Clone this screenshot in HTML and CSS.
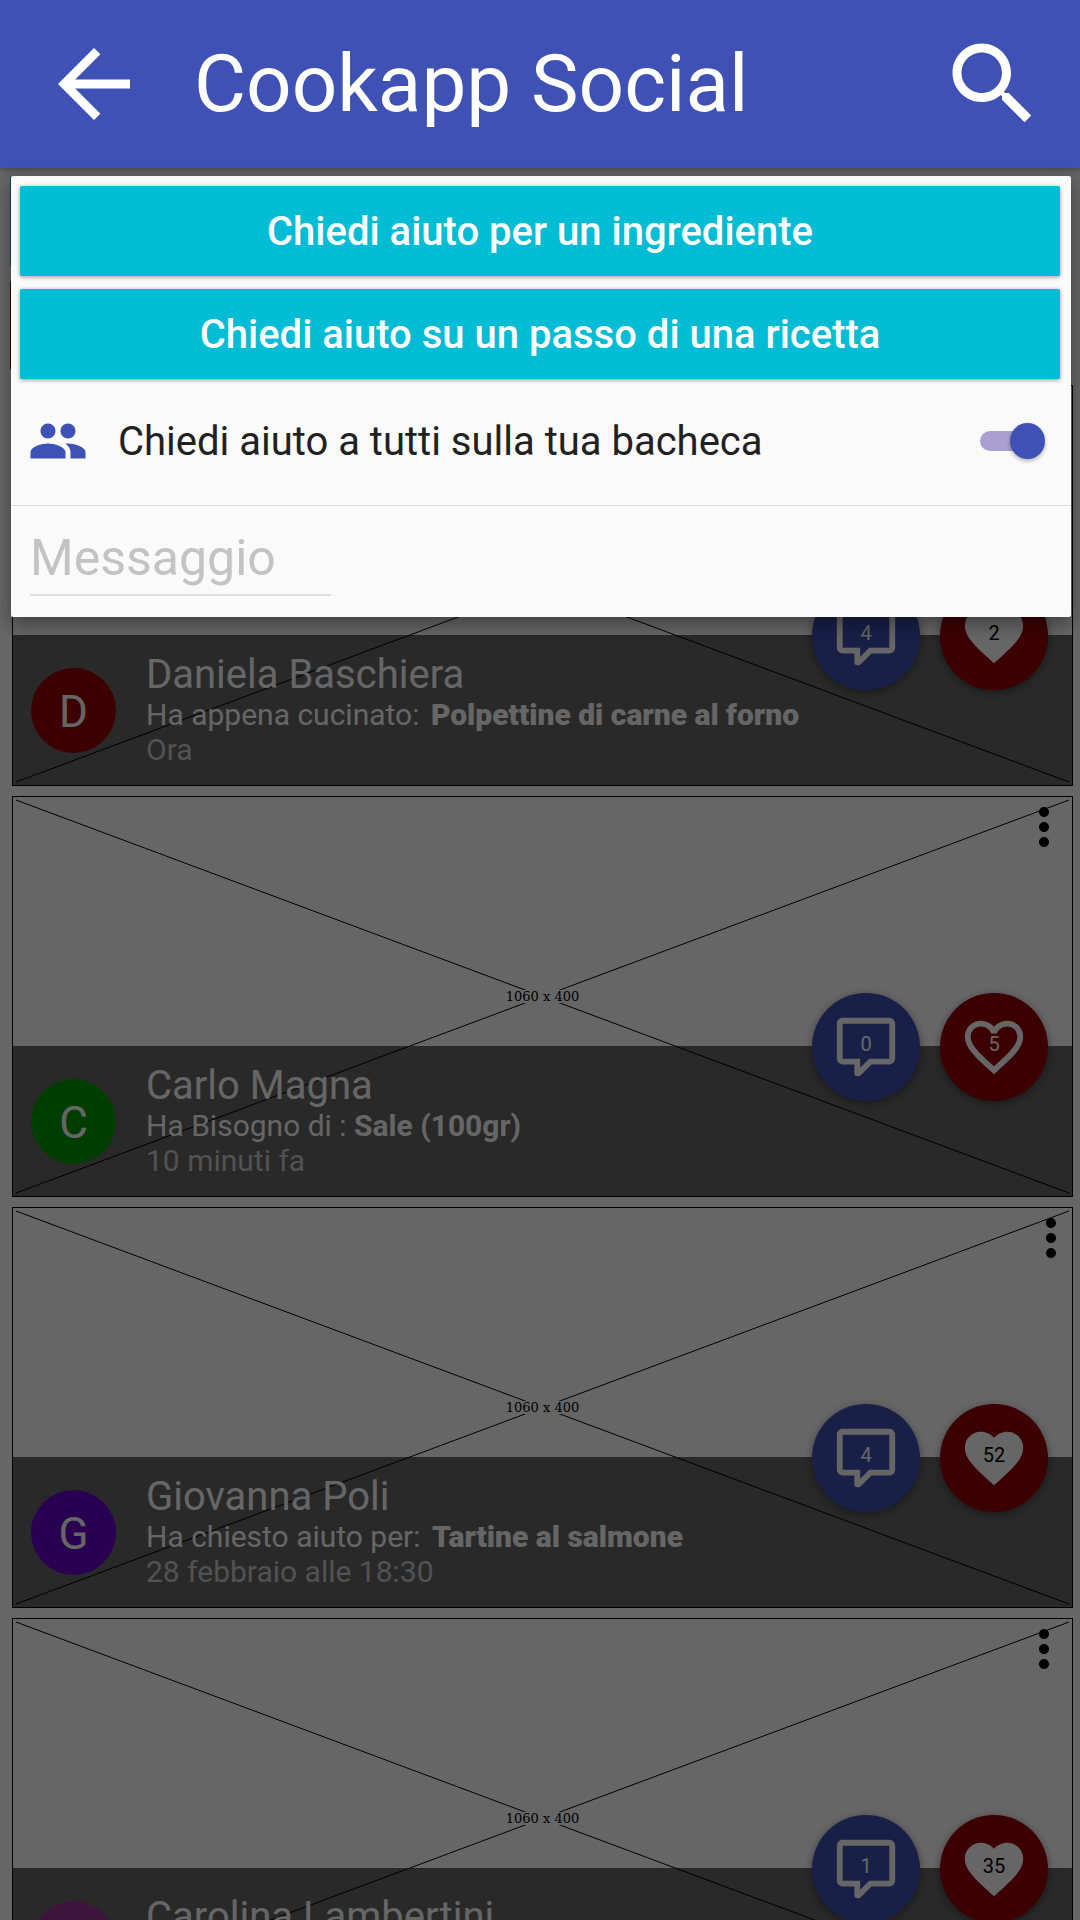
FILE: index.html
```html
<!DOCTYPE html>
<html lang="it">
<head>
<meta charset="utf-8">
<meta name="viewport" content="width=device-width, initial-scale=1">
<title>Cookapp Social</title>
<link rel="stylesheet" href="styles.css">
</head>
<body>
<svg class="sprite" aria-hidden="true">
  <symbol id="i-back" viewBox="0 0 24 24"><path d="M20 11H7.83l5.59-5.59L12 4l-8 8 8 8 1.41-1.41L7.83 13H20v-2z"/></symbol>
  <symbol id="i-search" viewBox="0 0 24 24"><path d="M15.5 14h-.79l-.28-.27C15.41 12.59 16 11.11 16 9.5 16 5.91 13.09 3 9.5 3S3 5.91 3 9.5 5.91 16 9.5 16c1.61 0 3.09-.59 4.23-1.57l.27.28v.79l5 4.99L20.49 19l-4.99-5zm-6 0C7.01 14 5 11.99 5 9.5S7.01 5 9.5 5 14 7.01 14 9.5 11.99 14 9.5 14z"/></symbol>
  <symbol id="i-people" viewBox="0 0 24 24"><path d="M16 11c1.66 0 2.99-1.34 2.99-3S17.66 5 16 5c-1.66 0-3 1.34-3 3s1.34 3 3 3zm-8 0c1.66 0 2.99-1.34 2.99-3S9.66 5 8 5C6.34 5 5 6.34 5 8s1.34 3 3 3zm0 2c-2.33 0-7 1.17-7 3.5V19h14v-2.500c0-2.330-4.670-3.500-7-3.500zm8 0c-.29 0-.62.02-.97.05 1.160.84 1.970 1.970 1.970 3.450V19h6v-2.500c0-2.330-4.670-3.500-7-3.500z"/></symbol>
  <symbol id="i-more" viewBox="0 0 24 24"><path d="M12 8c1.100 0 2-.9 2-2s-.9-2-2-2-2 .9-2 2 .9 2 2 2zm0 2c-1.100 0-2 .9-2 2s.9 2 2 2 2-.9 2-2-.9-2-2-2zm0 6c-1.100 0-2 .9-2 2s.9 2 2 2 2-.9 2-2-.9-2-2-2z"/></symbol>
  <symbol id="i-comment" viewBox="0 0 24 24"><path d="M9,22A1,1 0 0,1 8,21V18H4A2,2 0 0,1 2,16V4C2,2.890 2.900,2 4,2H20A2,2 0 0,1 22,4V16A2,2 0 0,1 20,18H13.900L10.200,21.710C10,21.900 9.750,22 9.500,22H9M10,16V19.080L13.080,16H20V4H4V16H10Z"/></symbol>
  <symbol id="i-heart" viewBox="0 0 24 24"><path d="M12 21.350l-1.450-1.320C5.400 15.360 2 12.280 2 8.500 2 5.420 4.420 3 7.500 3c1.740 0 3.410.81 4.500 2.090C13.090 3.810 14.760 3 16.500 3 19.580 3 22 5.420 22 8.500c0 3.780-3.400 6.860-8.550 11.540L12 21.350z"/></symbol>
  <symbol id="i-heart-line" viewBox="0 0 24 24"><path d="M16.500 3c-1.740 0-3.410.81-4.500 2.090C10.910 3.810 9.240 3 7.500 3 4.420 3 2 5.420 2 8.500c0 3.780 3.400 6.860 8.550 11.540L12 21.350l1.450-1.320C18.600 15.360 22 12.280 22 8.500 22 5.420 19.580 3 16.500 3zm-4.400 15.550l-.1.100-.1-.1C7.140 14.240 4 11.390 4 8.500 4 6.500 5.500 5 7.500 5c1.540 0 3.040.99 3.570 2.360h1.870C13.460 5.990 14.960 5 16.500 5c2 0 3.500 1.500 3.500 3.500 0 2.890-3.140 5.740-7.900 10.050z"/></symbol>
  <symbol id="i-cross" viewBox="0 0 1060 400" preserveAspectRatio="none"><path d="M3 3L1057 397M3 397L1057 3" fill="none" stroke="#000" vector-effect="non-scaling-stroke"/></symbol>
</svg>

<div class="app">
  <header class="bar">
    <button class="icon-btn" type="button" aria-label="Indietro"><svg class="bar-icon"><use href="#i-back"/></svg></button>
    <h1 class="bar-title">Cookapp Social</h1>
    <button class="icon-btn" type="button" aria-label="Cerca"><svg class="bar-icon"><use href="#i-search"/></svg></button>
  </header>

  <div class="stage">
    <main class="feed">
      <div class="shortcuts">
        <button class="shortcut" type="button" aria-label="Chiedi aiuto"></button>
        <button class="shortcut shortcut-red" type="button" aria-label="Condividi"></button>
      </div>

      <article class="post">
        <svg class="cross" aria-hidden="true"><use href="#i-cross"/></svg>
        <div class="photo">
          <span class="size">1060 x 400</span>
          <button class="menu" type="button" aria-label="Altro"><svg class="menu-icon"><use href="#i-more"/></svg></button>
        </div>
        <div class="band">
          <span class="avatar red">D</span>
          <div class="info">
            <h2 class="name">Daniela Baschiera</h2>
            <p class="action">Ha appena cucinato: <b class="item">Polpettine di carne al forno</b></p>
            <p class="time">Ora</p>
          </div>
          <div class="fabs">
            <button class="fab blue" type="button" aria-label="Commenti: 4"><svg class="fab-icon"><use href="#i-comment"/></svg><span class="count">4</span></button>
            <button class="fab red liked" type="button" aria-label="Mi piace: 2"><svg class="fab-icon"><use href="#i-heart"/></svg><span class="count">2</span></button>
          </div>
        </div>
      </article>

      <article class="post">
        <svg class="cross" aria-hidden="true"><use href="#i-cross"/></svg>
        <div class="photo">
          <span class="size">1060 x 400</span>
          <button class="menu" type="button" aria-label="Altro"><svg class="menu-icon"><use href="#i-more"/></svg></button>
        </div>
        <div class="band">
          <span class="avatar green">C</span>
          <div class="info">
            <h2 class="name">Carlo Magna</h2>
            <p class="action">Ha Bisogno di : <b>Sale (100gr)</b></p>
            <p class="time">10 minuti fa</p>
          </div>
          <div class="fabs">
            <button class="fab blue" type="button" aria-label="Commenti: 0"><svg class="fab-icon"><use href="#i-comment"/></svg><span class="count">0</span></button>
            <button class="fab red" type="button" aria-label="Mi piace: 5"><svg class="fab-icon"><use href="#i-heart-line"/></svg><span class="count">5</span></button>
          </div>
        </div>
      </article>

      <article class="post">
        <svg class="cross" aria-hidden="true"><use href="#i-cross"/></svg>
        <div class="photo">
          <span class="size">1060 x 400</span>
          <button class="menu menu-edge" type="button" aria-label="Altro"><svg class="menu-icon"><use href="#i-more"/></svg></button>
        </div>
        <div class="band">
          <span class="avatar violet">G</span>
          <div class="info">
            <h2 class="name">Giovanna Poli</h2>
            <p class="action">Ha chiesto aiuto per: <b class="item">Tartine al salmone</b></p>
            <p class="time">28 febbraio alle 18:30</p>
          </div>
          <div class="fabs">
            <button class="fab blue" type="button" aria-label="Commenti: 4"><svg class="fab-icon"><use href="#i-comment"/></svg><span class="count">4</span></button>
            <button class="fab red liked" type="button" aria-label="Mi piace: 52"><svg class="fab-icon"><use href="#i-heart"/></svg><span class="count">52</span></button>
          </div>
        </div>
      </article>

      <article class="post post-compact">
        <svg class="cross" aria-hidden="true"><use href="#i-cross"/></svg>
        <div class="photo">
          <span class="size">1060 x 400</span>
          <button class="menu" type="button" aria-label="Altro"><svg class="menu-icon"><use href="#i-more"/></svg></button>
        </div>
        <div class="band">
          <span class="avatar pink"></span>
          <div class="info">
            <h2 class="name">Carolina Lambertini</h2>
            <p class="action"></p>
            <p class="time"></p>
          </div>
          <div class="fabs">
            <button class="fab blue" type="button" aria-label="Commenti: 1"><svg class="fab-icon"><use href="#i-comment"/></svg><span class="count">1</span></button>
            <button class="fab red liked" type="button" aria-label="Mi piace: 35"><svg class="fab-icon"><use href="#i-heart"/></svg><span class="count">35</span></button>
          </div>
        </div>
      </article>
    </main>

    <div class="scrim"></div>

    <form class="dialog" role="dialog" aria-label="Chiedi aiuto">
      <div class="choices">
        <button class="choice" type="button">Chiedi aiuto per un ingrediente</button>
        <button class="choice" type="button">Chiedi aiuto su un passo di una ricetta</button>
      </div>
      <div class="option">
        <svg class="option-icon" aria-hidden="true"><use href="#i-people"/></svg>
        <label class="option-label" for="everyone">Chiedi aiuto a tutti sulla tua bacheca</label>
        <input class="switch" id="everyone" type="checkbox" role="switch" checked>
      </div>
      <div class="message">
        <input class="message-input" type="text" placeholder="Messaggio" aria-label="Messaggio">
      </div>
    </form>
  </div>
</div>
</body>
</html>
```
FILE: styles.css
```css
* {
  box-sizing: border-box;
  margin: 0;
}

body {
  font-family: Roboto, sans-serif;
  background: #fff;
}

button {
  border: 0;
  padding: 0;
  font: inherit;
  color: inherit;
  background: none;
}

svg {
  display: block;
  fill: currentColor;
}

.sprite {
  position: absolute;
  width: 0;
  height: 0;
}

.app {
  display: flex;
  flex-direction: column;
  height: 100vh;
  overflow: hidden;
}

/* Top bar */
.bar {
  position: relative;
  z-index: 1;
  flex: none;
  display: flex;
  align-items: center;
  padding: 30px 33px 30px 40px;
  color: #fff;
  background: #3f51b5;
  box-shadow: 0 2px 6px rgba(0, 0, 0, 0.3);
}

.bar-icon {
  width: 108px;
  height: 108px;
}

.bar-title {
  flex: 1;
  padding-left: 46px;
  font-size: 80px;
  line-height: 108px;
  font-weight: 400;
}

/* Feed */
.stage {
  position: relative;
  flex: 1;
  min-height: 0;
}

.feed {
  display: flex;
  flex-direction: column;
  gap: 10px;
  height: 100%;
  padding: 8px 7px 0 12px;
  overflow: hidden;
}

.shortcuts {
  display: grid;
  gap: 14px;
  margin: 0 8px 5px -2px;
}

.shortcut {
  height: 90px;
  border-radius: 2px;
  background: #00bcd4;
}

.shortcut-red {
  background: #900;
}

.post {
  position: relative;
  flex: none;
  border: 1px solid #000;
  background: #fff;
}

.cross {
  position: absolute;
  inset: 0;
  width: 100%;
  height: 100%;
}

.photo {
  position: relative;
  display: grid;
  grid-template-columns: 1fr auto 1fr;
  height: 249px;
}

.size {
  grid-column: 2;
  align-self: end;
  margin-bottom: 43px;
  font: 13px/13px "DejaVu Serif", serif;
  background: #fff;
}

.menu {
  justify-self: end;
  align-self: start;
  margin-right: -2px;
}

.menu-edge {
  margin-right: -9px;
}

.menu-icon {
  width: 60px;
  height: 60px;
}

.band {
  position: relative;
  display: flex;
  align-items: center;
  gap: 30px;
  height: 150px;
  padding-left: 18px;
  color: #fff;
  background: rgba(0, 0, 0, 0.6);
}

.avatar {
  flex: none;
  width: 85px;
  height: 85px;
  border-radius: 50%;
  font-size: 44px;
  line-height: 88px;
  text-align: center;
}

.info {
  flex: 1;
}

.name {
  font-size: 40px;
  line-height: 44px;
  font-weight: 400;
}

.action,
.time {
  min-height: 35px;
  font-size: 30px;
  line-height: 35px;
}

.post-compact .action,
.post-compact .time {
  min-height: 26px;
  line-height: 26px;
}

.item {
  margin-left: 4px;
  font-weight: 900;
}

.time {
  color: #ccc;
}

.fabs {
  position: absolute;
  top: -53px;
  right: 24px;
  display: flex;
  gap: 20px;
}

.fab {
  display: grid;
  place-items: center;
  width: 108px;
  height: 108px;
  border-radius: 50%;
  box-shadow: 0 2px 8px rgba(0, 0, 0, 0.4);
}

.fab-icon,
.count {
  grid-area: 1 / 1;
}

.fab-icon {
  width: 70px;
  height: 70px;
}

.count {
  padding-bottom: 6px;
  font-size: 20px;
  line-height: 24px;
}

.liked .count {
  color: #000;
}

.blue { background: #3f51b5; }
.red { background: #900; }
.green { background: #090; }
.violet { background: #60c; }
.pink { background: #939; }

/* Dialog */
.scrim {
  position: absolute;
  inset: 0;
  background: rgba(0, 0, 0, 0.6);
}

.dialog {
  position: absolute;
  z-index: 2;
  top: 8px;
  left: 11px;
  right: 9px;
  border-radius: 2px;
  background: #fafafa;
  box-shadow: 0 8px 16px rgba(0, 0, 0, 0.2), 0 6px 20px rgba(0, 0, 0, 0.2);
}

.choices {
  display: grid;
  gap: 13px;
  padding: 10px 11px 0 9px;
}

.choice {
  height: 90px;
  border-radius: 2px;
  font-size: 40px;
  font-weight: 500;
  color: #fff;
  background: #00bcd4;
  box-shadow: 0 1px 4px rgba(0, 0, 0, 0.4);
}

.option {
  display: flex;
  align-items: center;
  gap: 30px;
  height: 127px;
  padding: 0 26px 2px 17px;
  border-bottom: 1px solid #dcdcdc;
}

.option-icon {
  width: 60px;
  height: 60px;
  color: #3f51b5;
}

.option-label {
  flex: 1;
  font-size: 40px;
  color: #212121;
}

.switch {
  appearance: none;
  position: relative;
  width: 65px;
  height: 36px;
  margin: 0;
}

.switch::before {
  content: "";
  position: absolute;
  inset: 8px 8px 8px 0;
  border-radius: 10px;
  background: #a9a0cf;
}

.switch::after {
  content: "";
  position: absolute;
  top: 0;
  right: 0;
  width: 35px;
  height: 36px;
  border-radius: 50%;
  background: #3f51b5;
  box-shadow: 0 2px 4px rgba(0, 0, 0, 0.3);
}

.message {
  padding: 18px 19px 21px;
}

.message-input {
  display: block;
  width: 301px;
  height: 72px;
  padding: 0 0 2px;
  border: 0;
  border-bottom: 2px solid #e0e0e0;
  outline: 0;
  font: 50px Roboto, sans-serif;
  color: #212121;
  background: none;
}

.message-input::placeholder {
  color: #c3c3c3;
  opacity: 1;
}
```
